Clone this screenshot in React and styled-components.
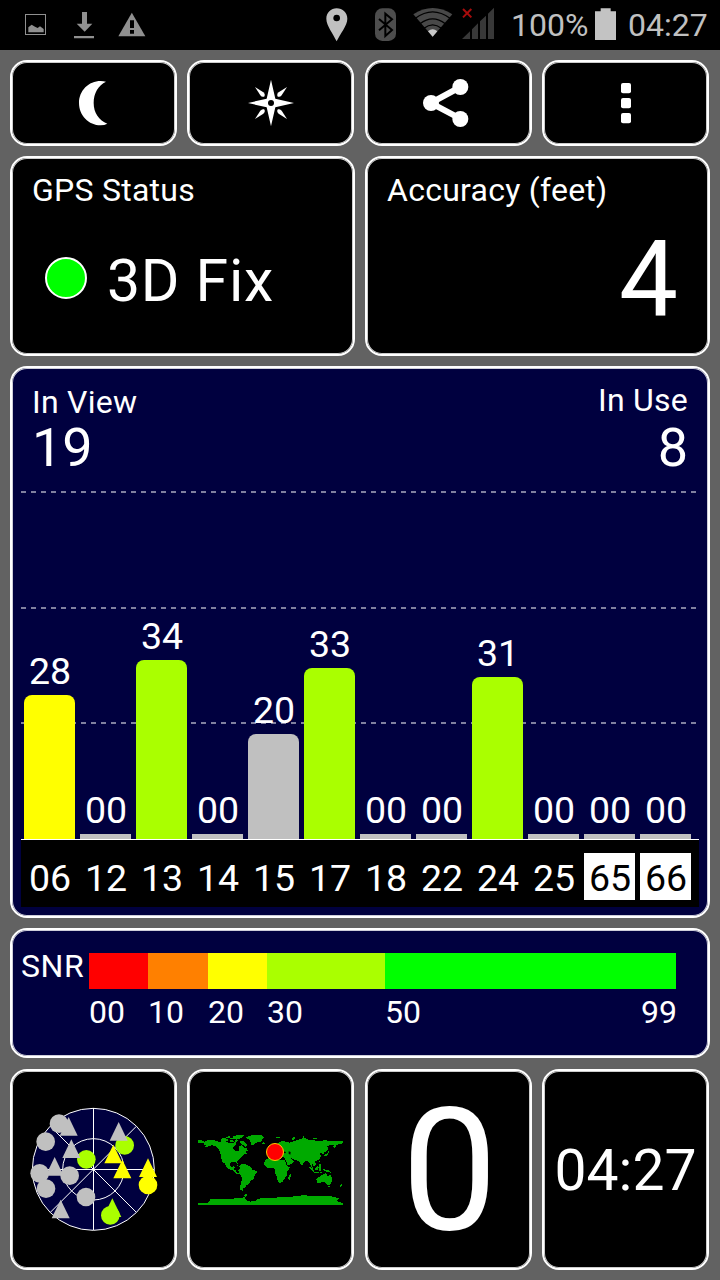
import styled, { createGlobalStyle } from "styled-components";

const GlobalStyle = createGlobalStyle`
  * {
    box-sizing: border-box;
  }

  body {
    margin: 0;
    background: #626262;
    color: #ffffff;
    font-family: Roboto, "Liberation Sans", sans-serif;
    font-weight: 400;
  }
`;

const Screen = styled.div`
  width: 720px;
  height: 1280px;
  overflow: hidden;
  background: #626262;
`;

/* status bar */

const StatusBar = styled.div`
  display: flex;
  height: 50px;
  padding: 6px 12px 6px 24px;
  background: #000000;
`;

const BarIcon = styled.svg`
  flex: none;
  width: ${(props) => props.$w}px;
  height: 38px;
  margin-right: ${(props) => props.$gap || 0}px;
`;

const BarText = styled.div`
  width: ${(props) => props.$w}px;
  color: #c0c0c0;
  font-size: 32px;
  line-height: 39px;
  white-space: nowrap;
`;

const Spacer = styled.div`
  flex: 1;
`;

/* panels */

const Dashboard = styled.div`
  display: flex;
  flex-direction: column;
  gap: 10px;
  padding: 10px;
`;

const Columns = styled.div`
  display: grid;
  grid-template-columns: 345px 345px;
  grid-template-rows: 100%;
  column-gap: 10px;
  height: ${(props) => props.$h}px;
  margin-top: ${(props) => props.$top || 0}px;
`;

const Half = styled.div`
  display: grid;
  grid-template-columns: 167px 167px;
  grid-template-rows: 100%;
  column-gap: 10px;
`;

const Panel = styled.div`
  border: 2px solid #ffffff;
  border-radius: 17px;
  box-shadow: inset 0 0 0 1px rgba(255, 255, 255, 0.8);
  background: #000000;
`;

const CenterPanel = styled(Panel)`
  display: flex;
  align-items: center;
  justify-content: center;
`;

const ToolIcon = styled.svg`
  width: 61px;
  height: 60px;
  fill: #ffffff;
`;

const InfoPanel = styled(Panel)`
  padding: 12px 28px 0 20px;
`;

const Label = styled.div`
  font-size: 32px;
  line-height: 40px;
  letter-spacing: 0.25px;
  white-space: nowrap;
`;

const FixRow = styled.div`
  display: flex;
  align-items: center;
  gap: 20px;
  padding: 36px 0 0 13px;
`;

const Dot = styled.div`
  width: 42px;
  height: 42px;
  margin-bottom: 6px;
  border: 2px solid #ffffff;
  border-radius: 50%;
  background: #00ff00;
`;

const FixText = styled.div`
  font-size: 59px;
  line-height: 70px;
  letter-spacing: 0.7px;
  white-space: nowrap;
`;

const Accuracy = styled.div`
  font-size: 105px;
  line-height: 120px;
  text-align: right;
  padding: 10px 2px 0 0;
`;

/* satellites chart */

const ChartPanel = styled(Panel)`
  display: flex;
  flex-direction: column;
  height: 552px;
  padding: 0 9px;
  background: #00003f;
`;

const ChartHeader = styled.div`
  display: flex;
  justify-content: space-between;
  height: 123px;
  padding: 0 11px;
`;

const Counter = styled.div`
  padding-top: ${(props) => props.$top}px;
  text-align: ${(props) => props.$align || "left"};
`;

const Count = styled.div`
  margin-top: ${(props) => props.$top}px;
  font-size: 54px;
  line-height: 54px;
`;

const Plot = styled.div`
  position: relative;
  height: 349px;
  width: 678px;
  border-bottom: 1px solid #ffffff;
`;

const GridLine = styled.div`
  position: absolute;
  left: 0;
  width: 675px;
  height: 2px;
  top: ${(props) => props.$top}px;
  background: repeating-linear-gradient(
    to right,
    #80809f 0 5px,
    transparent 5px 10px
  );
`;

const Bars = styled.div`
  position: relative;
  display: flex;
  align-items: flex-end;
  gap: 5px;
  height: 100%;
  padding-left: 3px;
`;

const BarColumn = styled.div`
  width: 51px;
`;

const BarValue = styled.div`
  padding-left: 1px;
  font-size: 37.5px;
  line-height: 48px;
  text-align: center;
`;

const Bar = styled.div`
  height: ${(props) => props.$height}px;
  border-radius: ${(props) => (props.$height > 10 ? "8px 8px 0 0" : "0")};
  background: ${(props) => props.$color};
`;

const Axis = styled.div`
  display: flex;
  gap: 5px;
  width: 678px;
  height: 67px;
  padding: 13px 0 0 3px;
  background: #000000;
`;

const Prn = styled.div`
  width: 51px;
  height: 47px;
  padding-left: 1px;
  font-size: 37.5px;
  line-height: 50px;
  text-align: center;
  color: ${(props) => (props.$inverse ? "#000000" : "#ffffff")};
  background: ${(props) => (props.$inverse ? "#ffffff" : "transparent")};
`;

/* signal legend */

const SnrPanel = styled(Panel)`
  display: flex;
  height: 130px;
  padding: 23px 30px 0 9px;
  background: #00003f;
`;

const SnrLabel = styled(Label)`
  width: 68px;
  margin-top: -7px;
  letter-spacing: 0.6px;
`;

const Scale = styled.div`
  display: grid;
  grid-template-columns: 59fr 60fr 59fr 118fr 291fr;
  grid-template-rows: 36px 46px;
  width: 587px;
`;

const Swatch = styled.div`
  background: ${(props) => props.$color};
`;

const Tick = styled.div`
  display: flex;
  justify-content: space-between;
  margin-right: -1px;
  font-size: 32px;
  line-height: 46px;
`;

const BigNumber = styled.div`
  padding: 3px 0 0 2px;
  font-size: 171px;
  line-height: 190px;
`;

const Clock = styled.div`
  padding-top: 2px;
  font-size: 57px;
  line-height: 70px;
  white-space: nowrap;
`;

const satellites = [
  { prn: "06", snr: "28", height: 144, color: "#ffff00" },
  { prn: "12", snr: "00", height: 5, color: "#c0c0c0" },
  { prn: "13", snr: "34", height: 179, color: "#aaff00" },
  { prn: "14", snr: "00", height: 5, color: "#c0c0c0" },
  { prn: "15", snr: "20", height: 105, color: "#c0c0c0" },
  { prn: "17", snr: "33", height: 171, color: "#aaff00" },
  { prn: "18", snr: "00", height: 5, color: "#c0c0c0" },
  { prn: "22", snr: "00", height: 5, color: "#c0c0c0" },
  { prn: "24", snr: "31", height: 162, color: "#aaff00" },
  { prn: "25", snr: "00", height: 5, color: "#c0c0c0" },
  { prn: "65", snr: "00", height: 5, color: "#c0c0c0", inverse: true },
  { prn: "66", snr: "00", height: 5, color: "#c0c0c0", inverse: true },
];

const skyCircles = [
  [117, 86, "#c0c0c0"],
  [77, 140, "#c0c0c0"],
  [59, 235, "#c0c0c0"],
  [78, 281, "#c0c0c0"],
  [149, 242, "#c0c0c0"],
  [198, 306, "#c0c0c0"],
  [199, 193, "#aaff00"],
  [314, 151, "#aaff00"],
  [271, 361, "#aaff00"],
  [384, 270, "#ffff00"],
];

// apex of each triangle
const skyTriangles = [
  [146, 66, "#c0c0c0"],
  [154, 133, "#c0c0c0"],
  [104, 186, "#c0c0c0"],
  [122, 314, "#c0c0c0"],
  [296, 81, "#c0c0c0"],
  [280, 149, "#ffff00"],
  [307, 194, "#ffff00"],
  [384, 190, "#ffff00"],
  [277, 310, "#aaff00"],
];

const SkyPlot = () => (
  <svg width="151" height="151" viewBox="-6 -3 453 453">
    <circle cx="220" cy="223" r="183" fill="#00003f" />
    <g fill="none" stroke="#ffffff" strokeWidth="3">
      <circle cx="220" cy="223" r="183" />
      <circle cx="220" cy="223" r="92" />
      <path d="M220.500 40V406M37 223.500H403" shapeRendering="crispEdges" />
      <path d="M91 94L349 352M349 94L91 352" />
    </g>
    {skyCircles.map(([x, y, color]) => (
      <circle key={`${x}-${y}`} cx={x} cy={y} r="28" fill={color} />
    ))}
    {skyTriangles.map(([x, y, color]) => (
      <path key={`${x}-${y}`} d={`M${x} ${y}l27 56h-54z`} fill={color} />
    ))}
  </svg>
);

const WorldMap = () => (
  <svg width="161" height="101" viewBox="0 -3 483 303">
    <g fill="#00aa00" shapeRendering="crispEdges">
      {/* north america and the arctic islands */}
      <path d="M42 66L54 60L72 61L84 65L100 64L108 67L126 69L138 66L137 76L128 82L130 88L140 94L146 92L147 80L154 76L162 82L170 85L173 92L164 96L171 100L160 105L154 111L147 119L142 124L143 134L138 127L126 126L120 130L120 138L126 143L132 138L134 142L130 148L138 150L141 159L148 160L146 163L138 160L128 151L114 146L108 138L102 128L104 136L98 126L94 116L92 102L86 88L78 79L66 76L54 80L44 82L50 76L42 74Z" />
      <path d="M24 60h8l10 4v4H24zM93 56l10-2 10 3 2 6-12 3-10-3zM118 62l8-4 6 6-8 3zM148 62l12 2 12 12-6 5-16-14zM120 54h16v4h-16zM108 51l12-3v5h-12zM136 60l7 1-2 5-5-1zM128 48l22-3 14 1-8 8-18 5-8-4z" />
      <path d="M168 52L180 47L198 45L216 46L222 51L216 60L214 64L198 68L190 77L184 74L180 62L174 56L164 54Z" />
      <path d="M213 69l9-2 4 4-7 3zM140 136l12 2 6 5-8-2zM154 143h12v3h-12z" />
      {/* south america */}
      <path d="M149 139L156 132L172 134L184 143L186 148L200 153L200 158L193 168L190 178L182 183L176 193L170 195L166 202L159 204L158 210L162 214L150 209L151 196L155 182L156 172L148 160L144 151L149 148Z" />
      {/* africa */}
      <path d="M230 117L240 112L256 111L258 117L266 120L284 120L290 136L295 141L301 142L290 156L290 168L284 175L279 184L269 189L263 184L261 172L256 162L256 150L250 144L234 144L222 135L222 127Z" />
      <path d="M297 166l5-3v8l-4 9-4-3z" />
      {/* europe and asia */}
      <path d="M255 80L264 69L276 62L290 66L300 68L306 66L316 62L330 57L344 54L354 59L368 60L380 63L404 61L430 63L459 63V70L444 73L438 77L433 86L430 80L436 74L420 75L410 80L415 84L412 93L402 98L400 105L396 100L389 99L393 108L390 117L381 122L374 124L379 133L372 139L366 131L368 143L373 150L366 145L360 131L354 124L346 123L338 132L337 139L330 132L328 124L318 121L310 118L302 114L306 120L314 123L305 131L294 137L288 124L282 112L270 111L262 106L250 106L236 111L232 109L234 100L242 98L246 90Z" />
      <path d="M258 51h12v3h-12zM304 60l6-8 8-2-4 6-4 5zM338 48l8 3-6 2zM370 54h10v3h-10zM402 106l10-6 3-8 3 3-6 10-8 5zM386 123h3v4h-3zM386 130l6 3v8l4 4-7 1z" />
      <path d="M360 141l14 12-3 3-13-13zM376 144l8-6 2 4-4 9-6-1zM372 155h14v3h-14zM388 145l8 2-5 3 2 4-5-1zM400 148l14 2 10 8-12-2-10-5zM390 157h7v2h-7z" />
      {/* oceania */}
      <path d="M379 176L388 171L394 165L400 163L406 160L412 162L412 167L418 168L420 161L426 174L426 184L420 194L412 195L406 188L396 186L386 190L381 188Z" />
      <path d="M414 198h5v3h-5zM450 198l4-6 3 3-7 6-5 3z" />
      {/* antarctica */}
      <path d="M24 249H54V246L60 241L54 240L66 237L94 236L118 238L142 234L156 235L164 230L160 226L170 221L172 226L164 233L168 240L180 245L196 243L206 236L226 233L256 233L282 230L302 232L318 227L350 226L364 229L404 227L430 230L446 235L440 242L446 246L459 249V255H24Z" />
    </g>
    {/* caspian and black seas */}
    <path d="M296 94l6 2-1 8-5-3zM280 94l8 2-2 4-6-1z" fill="#000000" />
    <circle cx="255" cy="96" r="25.5" fill="#ff0000" stroke="#ffcc00" strokeWidth="3" />
  </svg>
);

const NotificationIcons = () => (
  <>
    <BarIcon $w={24} $gap={24} viewBox="72 18 72 114">
      <rect x="76.500" y="43.500" width="60" height="60" fill="none" stroke="#909090" strokeWidth="3" />
      <path d="M85 97V82L95 74L105 80L113 84L120 79L131 87V97Z" fill="#909090" />
    </BarIcon>
    <BarIcon $w={24} $gap={21} viewBox="216 18 72 114" fill="#909090">
      <path d="M246 36H261V71H277L254 95L230 71H246ZM222 108H282V115H222Z" />
    </BarIcon>
    <BarIcon $w={30} viewBox="351 18 90 114">
      <path d="M395.500 38L436 109H355Z" fill="#909090" />
      <path d="M390 61H402V84H390ZM390 90H402V101H390Z" fill="#000000" />
    </BarIcon>
  </>
);

const SystemIcons = () => (
  <>
    <BarIcon $w={26} $gap={23} viewBox="972 18 78 114">
      <path
        d="M1010 124C1000 102 979 77 979 56C979 38 993 25 1010 25C1028 25 1042 38 1042 56C1042 77 1020 102 1010 124Z"
        fill="#c0c0c0"
      />
      <circle cx="1010" cy="54" r="10" fill="#000000" />
    </BarIcon>
    <BarIcon $w={26} $gap={12} viewBox="39 18 78 114">
      <rect x="45" y="25" width="63" height="98" rx="22" fill="#4d4d4d" />
      <path d="M57 57L96 90L76 108V41L96 58L57 91" fill="none" stroke="#000000" strokeWidth="6" />
    </BarIcon>
    <BarIcon $w={44} $gap={5} viewBox="153 18 132 114">
      <path d="M218 110L160 43Q218 5 277 43Z" fill="#484848" />
      <path
        d="M166 55Q218 16 270 55M180 71Q218 42 256 71M192 85Q218 64 244 85"
        fill="none"
        stroke="#000000"
        strokeWidth="4"
      />
      <path d="M218 110L204 94Q218 82 232 94Z" fill="#c8c8c8" />
    </BarIcon>
    <BarIcon $w={36} $gap={15} viewBox="300 18 108 114">
      <path
        d="M306 117L330 94V117ZM336 88L354 70V117H336ZM360 64L378 47V117H360ZM384 41L402 23V117H384Z"
        fill="#383838"
      />
      <path d="M309 27L334 52M334 27L309 52" stroke="#a80c0c" strokeWidth="6" />
    </BarIcon>
    <BarText $w={82}>100%</BarText>
    <BarIcon $w={25} $gap={10} viewBox="699 18 75 114">
      <path d="M722 25H752V34H768V120H705V34H722Z" fill="#c3c3c3" />
    </BarIcon>
    <BarText $w={80}>04:27</BarText>
  </>
);

const App = () => {
  return (
    <Screen>
      <GlobalStyle />
      <StatusBar>
        <NotificationIcons />
        <Spacer />
        <SystemIcons />
      </StatusBar>

      <Dashboard>
        <Columns $h={86}>
          <Half>
            <CenterPanel>
              <ToolIcon viewBox="189 219 183 180">
                <path d="M318 245Q310 243 302 243C266 243 237 272 237 309C237 346 266 376 302 376Q313 376 322 371C297 362 281 338 281 309C281 279 295 256 318 245Z" />
              </ToolIcon>
            </CenterPanel>
            <CenterPanel>
              <ToolIcon viewBox="720 219 183 180">
                <path d="M813 239L826 296L882 309L826 322L813 379L800 322L744 309L800 296Z" />
                <circle cx="813" cy="309" r="9" fill="#000000" />
                {[0, 90, 180, 270].map((angle) => (
                  <path
                    key={angle}
                    d="M765 261L790 277Q796 282 794 288L792 290Q785 292 781 286Z"
                    transform={`rotate(${angle} 813 309)`}
                  />
                ))}
              </ToolIcon>
            </CenterPanel>
          </Half>
          <Half>
            <CenterPanel>
              <ToolIcon viewBox="174 219 183 180">
                <path d="M301 261L212 309L301 356" fill="none" stroke="#ffffff" strokeWidth="18" />
                <circle cx="213" cy="309" r="24" />
                <circle cx="301" cy="261" r="24" />
                <circle cx="301" cy="357" r="24" />
              </ToolIcon>
            </CenterPanel>
            <CenterPanel>
              <ToolIcon viewBox="705 219 183 180">
                <rect x="783" y="249" width="30" height="31" rx="6" />
                <rect x="783" y="294" width="30" height="31" rx="6" />
                <rect x="783" y="339" width="30" height="31" rx="6" />
              </ToolIcon>
            </CenterPanel>
          </Half>
        </Columns>

        <Columns $h={200}>
          <InfoPanel>
            <Label>GPS Status</Label>
            <FixRow>
              <Dot />
              <FixText>3D Fix</FixText>
            </FixRow>
          </InfoPanel>
          <InfoPanel>
            <Label>Accuracy (feet)</Label>
            <Accuracy>4</Accuracy>
          </InfoPanel>
        </Columns>

        <ChartPanel>
          <ChartHeader>
            <Counter $top={14}>
              <Label>In View</Label>
              <Count $top={-1}>19</Count>
            </Counter>
            <Counter $top={12} $align="right">
              <Label>In Use</Label>
              <Count $top={1}>8</Count>
            </Counter>
          </ChartHeader>
          <Plot>
            <GridLine $top={0} />
            <GridLine $top={116} />
            <GridLine $top={231} />
            <Bars>
              {satellites.map((sat) => (
                <BarColumn key={sat.prn}>
                  <BarValue>{sat.snr}</BarValue>
                  <Bar $height={sat.height} $color={sat.color} />
                </BarColumn>
              ))}
            </Bars>
          </Plot>
          <Axis>
            {satellites.map((sat) => (
              <Prn key={sat.prn} $inverse={sat.inverse}>
                {sat.prn}
              </Prn>
            ))}
          </Axis>
        </ChartPanel>

        <SnrPanel>
          <SnrLabel>SNR</SnrLabel>
          <Scale>
            <Swatch $color="#ff0000" />
            <Swatch $color="#ff8000" />
            <Swatch $color="#ffff00" />
            <Swatch $color="#aaff00" />
            <Swatch $color="#00ff00" />
            <Tick>00</Tick>
            <Tick>10</Tick>
            <Tick>20</Tick>
            <Tick>30</Tick>
            <Tick>
              <span>50</span>
              <span>99</span>
            </Tick>
          </Scale>
        </SnrPanel>

        <Columns $h={201} $top={1}>
          <Half>
            <CenterPanel>
              <SkyPlot />
            </CenterPanel>
            <CenterPanel>
              <WorldMap />
            </CenterPanel>
          </Half>
          <Half>
            <CenterPanel>
              <BigNumber>0</BigNumber>
            </CenterPanel>
            <CenterPanel>
              <Clock>04:27</Clock>
            </CenterPanel>
          </Half>
        </Columns>
      </Dashboard>
    </Screen>
  );
};

export default App;
